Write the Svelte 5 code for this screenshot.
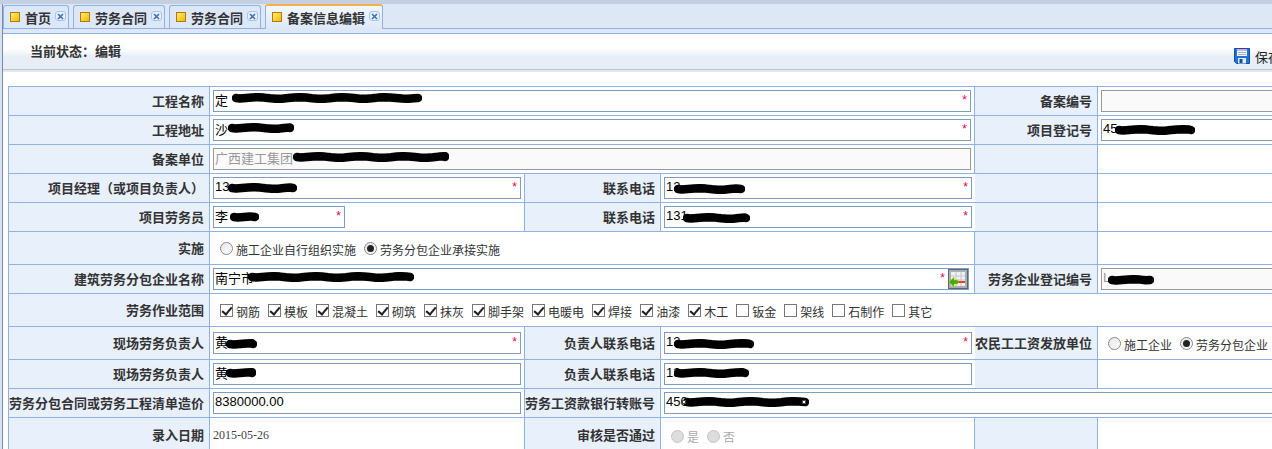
<script>
	const tabs = [
		{ title: '首页' },
		{ title: '劳务合同' },
		{ title: '劳务合同' },
		{ title: '备案信息编辑', active: true }
	];

	const scopes = [
		['钢筋', true], ['模板', true], ['混凝土', true], ['砌筑', true], ['抹灰', true],
		['脚手架', true], ['电暖电', true], ['焊接', true], ['油漆', true], ['木工', true],
		['钣金', false], ['架线', false], ['石制作', false], ['其它', false]
	];

	// wobbly marker stroke used for the blacked out parts of a value
	function scribble(w) {
		let d = 'M4 5';
		for (let x = 8; x < w - 3; x += 6) {
			d += ` L${x} ${(5 + Math.sin(x * 0.9) * 0.8).toFixed(1)}`;
		}
		return d + ` L${w - 4} 5`;
	}
</script>

{#snippet field(value, width, opts = {})}
	<span class="field" style="width:{width}px">
		<input class:ro={opts.ro} type="text" {value} readonly />
		{#if opts.star}<i class="star" class:shift={opts.picker}>*</i>{/if}
		{#if opts.picker}
			<svg class="picker" width="20" height="20" viewBox="0 0 20 20">
				<rect x="0.5" y="0.5" width="19" height="19" fill="#a8aeb4" stroke="#5c6670" />
				<rect x="3" y="3" width="14" height="14" fill="#eef0f2" />
				<path d="M3 7h14M3 11h14M8 3v14M13 3v14" stroke="#c3c8ce" />
				<rect x="9" y="12" width="8" height="2" fill="#e8402c" />
				<path d="M1 13l5-5v3h4v4H6v3z" fill="#35b012" stroke="#c7d400" stroke-width="0.6" />
			</svg>
		{/if}
		{#if opts.blob}
			<svg class="blob" style="left:{opts.blob[0]}px;top:{opts.blob[2] - 5}px" width={opts.blob[1]} height="10">
				<path d={scribble(opts.blob[1])} />
			</svg>
		{/if}
		{#if opts.handles}
			<b class="handle" style="left:{opts.handles[0]}px"></b>
			<b class="handle" style="left:{opts.handles[1]}px"></b>
		{/if}
	</span>
{/snippet}

{#snippet radio(label, checked, disabled = false)}
	<label class="opt" class:off={disabled}>
		<input type="radio" {checked} {disabled} onclick={(e) => e.preventDefault()} />{label}
	</label>
{/snippet}

<div class="page">
	<div class="topbar"></div>
	<div class="main">
		<div class="tabs">
			{#each tabs as tab}
				<div class="tab" class:active={tab.active}>
					<span class="tab-icon"></span>
					<span class="tab-title">{tab.title}</span>
					<span class="tab-close">
						<svg width="7" height="7" viewBox="0 0 7 7"><path d="M1 1l5 5M6 1L1 6" /></svg>
					</span>
				</div>
			{/each}
		</div>
		<div class="strip"></div>

		<div class="toolbar">
			<span class="status">当前状态：编辑</span>
			<span class="save">
				<svg width="16" height="16" viewBox="0 0 16 16">
					<path d="M0.5 0.5h15v15h-13l-2-2z" fill="#1c74d8" stroke="#0f4fa8" />
					<rect x="3" y="1" width="10" height="1.5" fill="#e69ae6" />
					<rect x="3" y="2.5" width="10" height="5.5" fill="#f4f6fa" />
					<path d="M4 4.5h8M4 6.5h8" stroke="#a9b4c4" />
					<rect x="4" y="10" width="8" height="5.5" fill="#e4ecf6" />
					<rect x="5.5" y="11" width="3" height="4" fill="#0f4fa8" />
				</svg>
				保存
			</span>
		</div>
		<div class="toolbar-foot"></div>

		<table>
			<colgroup>
				<col style="width:201px" /><col style="width:315px" /><col style="width:136px" />
				<col style="width:314px" /><col style="width:123px" /><col style="width:303px" />
			</colgroup>
			<tbody>
				<tr>
					<th>工程名称</th>
					<td colspan="3">{@render field('定', 758, { star: true, blob: [19, 190, 8] })}</td>
					<th>备案编号</th>
					<td>{@render field('', 290, { ro: true })}</td>
				</tr>
				<tr>
					<th>工程地址</th>
					<td colspan="3">{@render field('沙', 758, { star: true, blob: [15, 66, 9] })}</td>
					<th>项目登记号</th>
					<td>{@render field('45', 290, { blob: [14, 80, 11] })}</td>
				</tr>
				<tr>
					<th>备案单位</th>
					<td colspan="3">{@render field('广西建工集团', 758, { ro: true, blob: [80, 156, 9] })}</td>
					<th></th>
					<td></td>
				</tr>
				<tr>
					<th>项目经理（或项目负责人）</th>
					<td>{@render field('13', 308, { star: true, blob: [15, 69, 11] })}</td>
					<th>联系电话</th>
					<td>{@render field('13', 308, { star: true, blob: [10, 71, 12] })}</td>
					<th class="open"></th>
					<td></td>
				</tr>
				<tr>
					<th>项目劳务员</th>
					<td>{@render field('李', 132, { star: true, blob: [17, 29, 11] })}</td>
					<th>联系电话</th>
					<td>{@render field('131', 308, { star: true, blob: [19, 67, 12] })}</td>
					<th class="open"></th>
					<td></td>
				</tr>
				<tr class="tall">
					<th>实施</th>
					<td colspan="3">
						<div class="opts">
							{@render radio('施工企业自行组织实施', false)}
							{@render radio('劳务分包企业承接实施', true)}
						</div>
					</td>
					<th></th>
					<td></td>
				</tr>
				<tr>
					<th>建筑劳务分包企业名称</th>
					<td colspan="3">{@render field('南宁市', 756, { star: true, picker: true, blob: [35, 166, 9] })}</td>
					<th>劳务企业登记编号</th>
					<td>{@render field('L', 290, { ro: true, blob: [7, 46, 12] })}</td>
				</tr>
				<tr class="tall">
					<th>劳务作业范围</th>
					<td colspan="5">
						<div class="opts checks">
							{#each scopes as [name, on]}
								<label class="opt"><input type="checkbox" checked={on} onclick={(e) => e.preventDefault()} />{name}</label>
							{/each}
						</div>
					</td>
				</tr>
				<tr class="tall">
					<th>现场劳务负责人</th>
					<td>{@render field('黄', 308, { star: true, blob: [13, 31, 12] })}</td>
					<th>负责人联系电话</th>
					<td>{@render field('13', 308, { star: true, blob: [10, 80, 12] })}</td>
					<th class="open">农民工工资发放单位</th>
					<td>
						<div class="opts">
							{@render radio('施工企业', false)}
							{@render radio('劳务分包企业', true)}
						</div>
					</td>
				</tr>
				<tr>
					<th>现场劳务负责人</th>
					<td>{@render field('黄', 308, { blob: [13, 30, 10] })}</td>
					<th>负责人联系电话</th>
					<td>{@render field('13', 308, { blob: [10, 75, 10] })}</td>
					<th class="open"></th>
					<td></td>
				</tr>
				<tr>
					<th>劳务分包合同或劳务工程清单造价</th>
					<td>{@render field('8380000.00', 308)}</td>
					<th>劳务工资款银行转账号</th>
					<td colspan="3">{@render field('450', 700, { blob: [19, 126, 10], handles: [18, 138] })}</td>
				</tr>
				<tr class="last">
					<th>录入日期</th>
					<td class="date">2015-05-26</td>
					<th>审核是否通过</th>
					<td>
						<div class="opts">
							{@render radio('是', false, true)}
							{@render radio('否', false, true)}
						</div>
					</td>
					<th></th>
					<td></td>
				</tr>
			</tbody>
		</table>
	</div>
</div>

<style>
	:global(body) {
		margin: 0;
		background: #fff;
		overflow: hidden;
	}

	.page {
		width: 1272px;
		height: 449px;
		overflow: hidden;
		background: #d8e2f2;
		font-family: 'Liberation Sans', 'Noto Sans CJK SC', sans-serif;
		font-size: 13px;
		color: #333;
	}

	.topbar {
		height: 4px;
		background: #c4d0e2;
	}

	.main {
		margin-left: 2px;
		border-left: 1px solid #7b8ba6;
		height: 445px;
		background: #fff;
	}

	.tabs {
		display: flex;
		align-items: flex-end;
		gap: 4px;
		height: 24px;
		background: #dee7f5;
		border-bottom: 1px solid #8db2e3;
		box-sizing: content-box;
	}

	.tab {
		position: relative;
		display: flex;
		align-items: center;
		height: 23px;
		box-sizing: border-box;
		padding: 0 2px 0 6px;
		margin-bottom: 0;
		background: #dce8fa;
		border: 1px solid #8db2e3;
		border-bottom: none;
		border-radius: 3px 3px 0 0;
	}

	.tab.active {
		height: 25px;
		margin-bottom: -1px;
		padding-bottom: 1px;
		border-top: 2px solid #f7b047;
		background: linear-gradient(#f2f7fe, #dce8fa);
	}

	.tab-icon {
		width: 10px;
		height: 10px;
		box-sizing: border-box;
		border: 1px solid #b07d00;
		background: linear-gradient(135deg, #ffe97a, #f6b900);
	}

	.tab-title {
		margin: 3px 4px 0 5px;
		font-weight: bold;
		white-space: nowrap;
		line-height: 16px;
	}

	.tab-close {
		display: flex;
		align-items: center;
		justify-content: center;
		width: 11px;
		height: 10px;
		margin-top: -2px;
		box-sizing: border-box;
		background: #e6effc;
		border: 1px solid #a9c4ec;
		border-radius: 3px;
	}

	.tab-close path {
		stroke: #3d6fb8;
		stroke-width: 1.6;
		fill: none;
	}

	.strip {
		height: 4px;
		background: #dee7f5;
		border-bottom: 1px solid #8db2e3;
	}

	.toolbar {
		display: flex;
		align-items: center;
		justify-content: space-between;
		height: 35px;
		padding: 0 0 0 27px;
		border-bottom: 1px solid #b9c8ca;
		background: linear-gradient(#fff 0, #fff 40%, #e8eef7 65%, #e8eef7 100%);
	}

	.status {
		font-weight: bold;
		margin-top: -3px;
	}

	.save {
		display: flex;
		align-items: center;
		gap: 5px;
		width: 38px;
		flex: none;
		white-space: nowrap;
		margin-top: 9px;
		color: #222;
	}

	.save svg {
		flex: none;
	}

	.toolbar-foot {
		height: 2px;
		background: #e4e8ec;
		margin-bottom: 14px;
	}

	table {
		table-layout: fixed;
		width: 1392px;
		margin-left: 5px;
		border-collapse: collapse;
	}

	th,
	td {
		height: 28px;
		padding: 0 0 0 3px;
		border: 1px solid #8db2e3;
		white-space: nowrap;
		box-sizing: content-box;
	}

	tr.tall td {
		height: 32px;
	}

	tr.last td {
		height: 35px;
	}

	/* 2px bottom padding lifts the labels, so the heights give it back */
	th {
		height: 26px;
		padding: 0 5px 2px 0;
		text-align: right;
		font-weight: bold;
		background: #e8f0fc;
	}

	tr.tall th {
		height: 30px;
	}

	tr.last th {
		height: 33px;
	}

	th.open {
		border-left: hidden;
	}

	td {
		background: #fff;
	}

	.date {
		font-family: 'Liberation Serif', serif;
		font-size: 12px;
		color: #444;
	}

	.field {
		position: relative;
		display: block;
		height: 22px;
		margin-top: -1px;
	}

	.field input {
		display: block;
		width: 100%;
		height: 100%;
		box-sizing: border-box;
		margin: 0;
		padding: 0 1px 2px;
		border: 1px solid #7f9db9;
		border-radius: 0;
		outline: none;
		font: inherit;
		color: #000;
		background: #fff;
	}

	.field input.ro {
		border-color: #999;
		color: #999;
		background: #fafafa;
	}

	.star {
		position: absolute;
		top: 3px;
		right: 4px;
		font-style: normal;
		font-size: 12px;
		line-height: 14px;
		color: #f2003c;
	}

	.star.shift {
		right: 24px;
	}

	.picker {
		position: absolute;
		top: 1px;
		right: 1px;
	}

	.blob {
		position: absolute;
		pointer-events: none;
	}

	.blob path {
		fill: none;
		stroke: #000;
		stroke-width: 8.5;
		stroke-linecap: round;
		stroke-linejoin: round;
	}

	.handle {
		position: absolute;
		top: 8px;
		width: 4px;
		height: 4px;
		background: #fff;
		border: 1px solid #444;
		box-sizing: border-box;
	}

	.opts {
		display: flex;
		align-items: center;
		gap: 8px;
		padding-left: 7px;
		padding-top: 5px;
	}

	.opt {
		display: inline-flex;
		align-items: center;
		gap: 3px;
		font-size: 12px;
		line-height: 16px;
		color: #333;
	}

	.opt.off {
		color: #aaa;
	}

	.opt input {
		appearance: none;
		position: relative;
		flex: none;
		width: 13px;
		height: 13px;
		margin: 0 0 4px;
		box-sizing: border-box;
		background: #fff;
		border: 1px solid #777;
	}

	.opt input[type='radio'] {
		border-radius: 50%;
		border-color: #888;
		background: linear-gradient(135deg, #e6e6e6, #fff);
	}

	.opt input[type='radio']:checked::after {
		content: '';
		position: absolute;
		left: 2px;
		top: 2px;
		width: 7px;
		height: 7px;
		border-radius: 50%;
		background: #222;
	}

	.opt input[type='radio']:disabled {
		border-color: #c4c4c4;
		background: #ddd;
	}

	.opt input[type='checkbox']:checked::after {
		content: '';
		position: absolute;
		left: 3px;
		top: 0;
		width: 4px;
		height: 8px;
		border: solid #222;
		border-width: 0 2px 2px 0;
		transform: rotate(40deg);
	}
</style>
